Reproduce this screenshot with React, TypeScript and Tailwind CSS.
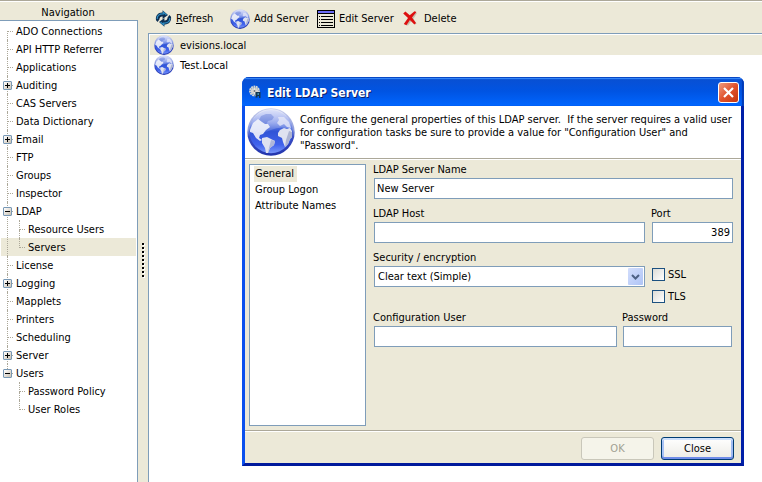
import { useId, useState } from 'react';

type Node = { label: string; expandable?: boolean; children?: string[] };

const tree: Node[] = [
  { label: 'ADO Connections' },
  { label: 'API HTTP Referrer' },
  { label: 'Applications' },
  { label: 'Auditing', expandable: true },
  { label: 'CAS Servers' },
  { label: 'Data Dictionary' },
  { label: 'Email', expandable: true },
  { label: 'FTP' },
  { label: 'Groups' },
  { label: 'Inspector' },
  { label: 'LDAP', expandable: true, children: ['Resource Users', 'Servers'] },
  { label: 'License' },
  { label: 'Logging', expandable: true },
  { label: 'Mapplets' },
  { label: 'Printers' },
  { label: 'Scheduling' },
  { label: 'Server', expandable: true },
  { label: 'Users', expandable: true, children: ['Password Policy', 'User Roles'] },
];

function Globe({ className }: { className: string }) {
  const id = useId();
  return (
    <svg viewBox="0 0 48 48" className={className} aria-hidden="true">
      <defs>
        <linearGradient id={id + 'r'} x1="0" y1="0" x2="0" y2="1">
          <stop offset="0" stopColor="#c9cfee" />
          <stop offset="0.45" stopColor="#8c9bdc" />
          <stop offset="0.6" stopColor="#3a4ec4" />
          <stop offset="1" stopColor="#2234ac" />
        </linearGradient>
        <linearGradient id={id + 'o'} x1="0" y1="0" x2="0" y2="1">
          <stop offset="0" stopColor="#aab6f0" />
          <stop offset="0.3" stopColor="#6d86e6" />
          <stop offset="0.5" stopColor="#3054d6" />
          <stop offset="0.8" stopColor="#4062ec" />
          <stop offset="1" stopColor="#7896fa" />
        </linearGradient>
        <linearGradient id={id + 'g'} x1="0" y1="0" x2="0" y2="1">
          <stop offset="0" stopColor="#ffffff" stopOpacity="0.6" />
          <stop offset="1" stopColor="#ffffff" stopOpacity="0.1" />
        </linearGradient>
      </defs>
      <circle cx="24" cy="24" r="23.7" fill={`url(#${id}r)`} />
      <circle cx="24" cy="23.6" r="21.6" fill={`url(#${id}o)`} />
      <path d="M14 8l5-2 5 0 3 3-2 3-4 1-2 4-4-2-3-3z" fill="#3f5ed4" />
      <path d="M3 22l3-7 5-4 4 3 3 2 3 0 2 3-4 3-3 4-3 1-1 3 3 2-2 1-4-3-3-5-3-1z" fill="#dfe4f7" />
      <path d="M15 30l5-1 4 2 4 2-1 4-4 3-2 5-2 0-1-5-3-5z" fill="#dfe2f0" />
      <path d="M24 32l4 1-1 4-4 3-2 4z" fill="#aeb6da" />
      <path d="M31 9l6 0 5 5 2 6-4-1-3-3-4 2-3-3 2-3z" fill="#c4ccf2" />
      <path d="M33 22l4-2 3 1 3-1 2 3 0 6-2 2-2 5-3 3-2-5-1-4-4-2 0-3z" fill="#dfe2f0" />
      <path d="M42 23l3 1 0 5-2 2-2 5-3 3 1-7z" fill="#adb4d2" />
      <path d="M3 22A21 21 0 0 1 45 22Q35 17 24 22T3 22z" fill={`url(#${id}g)`} />
    </svg>
  );
}

function RefreshIcon() {
  return (
    <svg viewBox="0 0 17 17" className="h-[17px] w-[17px]" aria-hidden="true">
      <path d="M1 10.200C.2 5.500 3.400 2.200 7.600 2.600V.3L13 5 7.600 9V6.400C5.600 6.200 4.600 7.400 4.400 9.400L2.600 12z" fill="#0e2f52" />
      <path d="M2.200 9C2 5.600 4.300 3.700 8.500 3.900V2.300L11.500 5" fill="none" stroke="#2d8cc0" strokeWidth="1.200" />
      <path d="M16 6.800c.8 4.700-2.400 8-6.600 7.600v2.300L4 12l5.400-4v2.600c2 .2 3-1 3.200-3L14.400 5z" fill="#0e2f52" />
      <path d="M14.800 8c.2 3.400-2.100 5.300-6.300 5.100v1.600L5.500 12" fill="none" stroke="#2d8cc0" strokeWidth="1.200" />
    </svg>
  );
}

function EditIcon() {
  return (
    <svg viewBox="0 0 18 18" className="h-[18px] w-[18px]" shapeRendering="crispEdges" aria-hidden="true">
      <rect width="18" height="18" fill="#000" />
      <rect x="1" y="1" width="16" height="2" fill="#6b6bf5" />
      <rect x="1" y="4" width="16" height="13" fill="#ece9d8" />
      {[6, 9, 12, 15].map((y) => (
        <g key={y} fill="#000">
          <rect x="2" y={y} width="1" height="1" />
          <rect x="4" y={y} width="12" height="1" />
        </g>
      ))}
    </svg>
  );
}

function DeleteIcon() {
  return (
    <svg viewBox="0 0 14 15" className="h-[15px] w-[14px]" aria-hidden="true">
      <path d="M2.500 3L7 7.500 3 14l2 .6 3.600-4.800 4 3.800 1-1.200-3.300-4.500L14 2 12 1.200 8.300 5.600z" fill="#c4bfae" />
      <path d="M.2 2.400L2.400.4l4.300 3.900L11.600.2l1.800.9-4.400 5.300 4 5.500-1.600 1.500-4.500-4.400-3.500 5.300-2.600-1.300L5 6.900z" fill="#dd1010" />
    </svg>
  );
}

function GearIcon() {
  return (
    <svg viewBox="0 0 13 14" className="h-[14px] w-[13px]" aria-hidden="true">
      <circle cx="5.500" cy="6" r="4.400" fill="none" stroke="#d9d9d2" strokeWidth="2" strokeDasharray="1.800 .6" />
      <circle cx="5.500" cy="6" r="3.800" fill="#c3c5c4" />
      <path d="M5.500 2.500v7M2 6h7M3 3.500l5 5M8 3.500l-5 5" stroke="#f2f2ee" strokeWidth=".7" />
      <circle cx="5.500" cy="6" r="1" fill="#70747a" />
      <path d="M6.500 7h5v6H10v-2H8.500v1.500h-2z" fill="#123650" />
      <path d="M8.500 8H10v2H8.500z" fill="#3f8fb0" />
    </svg>
  );
}

function TreeLabel({ label, selected, level }: { label: string; selected: boolean; level: number }) {
  return (
    <button
      type="button"
      className={`flex h-[18px] w-full items-center text-left whitespace-nowrap ${level ? 'pl-[27px]' : 'pl-[15px]'} ${selected ? 'bg-[#ece9d8]' : ''}`}
    >
      {label}
    </button>
  );
}

function TreeItem({ node, first, last }: { node: Node; first: boolean; last: boolean }) {
  return (
    <li className="relative">
      <TreeLabel label={node.label} selected={false} level={0} />
      {node.children && (
        <ul>
          {node.children.map((c, i) => (
            <li key={c} className="relative">
              <TreeLabel label={c} selected={c === 'Servers'} level={1} />
              <span className="absolute top-0 left-[18px] h-[10px] w-[6px] border-b border-l border-dotted border-[#aca899]" />
              {i === 0 && <span className="absolute top-[10px] left-[18px] h-2 border-l border-dotted border-[#aca899]" />}
            </li>
          ))}
        </ul>
      )}
      <span
        className={`absolute left-[6px] border-l border-dotted border-[#aca899] ${first ? 'top-[9px] bottom-0' : last ? 'top-0 h-[9px]' : 'inset-y-0'}`}
      />
      <span className="absolute top-[9px] left-[6px] w-[6px] border-t border-dotted border-[#aca899]" />
      {node.expandable && (
        <span className="absolute top-[5px] left-[2px] grid h-[9px] w-[9px] place-items-center rounded-[1px] border border-[#7898b5] bg-linear-to-br from-white to-[#c9c1b2]">
          <svg viewBox="0 0 5 5" className="h-[5px] w-[5px]" shapeRendering="crispEdges" aria-hidden="true">
            <rect y="2" width="5" height="1" />
            {!node.children && <rect x="2" width="1" height="5" />}
          </svg>
        </span>
      )}
    </li>
  );
}

const field = 'h-[21px] w-full border border-[#7f9db9] bg-white px-[2px] pb-px outline-none';

function Field({ label, value = '', type = 'text', className, right }: { label: string; value?: string; type?: string; className: string; right?: boolean }) {
  const id = useId();
  return (
    <div className={`flex flex-col ${className}`}>
      <label htmlFor={id} className="-ml-px h-[14px] leading-[12px] whitespace-nowrap">{label}</label>
      <input id={id} type={type} defaultValue={value} className={right ? `${field} text-right` : field} />
    </div>
  );
}

function Check({ label }: { label: string }) {
  return (
    <label className="flex h-[13px] items-center gap-[3px]">
      <input type="checkbox" className="h-[13px] w-[13px] appearance-none border border-[#1c5180] bg-linear-to-br from-[#dcdcd7] to-white" />
      {label}
    </label>
  );
}

function Dialog({ onClose }: { onClose: () => void }) {
  return (
    <section
      role="dialog"
      aria-label="Edit LDAP Server"
      className="absolute top-[76px] left-[242px] w-[502px] overflow-hidden rounded-t-[7px] bg-[#0040dd]"
    >
      <header className="flex h-[29px] items-center bg-linear-to-b from-[#0a4fd0] via-[#0054e3] to-[#0066ff] pr-[5px] pl-[7px] shadow-[inset_0_1px_0_#0847c4,inset_0_2px_1px_#3c8cfb,inset_-2px_0_1px_#0138b4]">
        <GearIcon />
        <h1 className="ml-[5px] flex-1 pt-[3px] text-[12px] font-bold text-white [text-shadow:1px_1px_0_#0a1f6b]">Edit LDAP Server</h1>
        <button
          type="button"
          aria-label="Close dialog"
          onClick={onClose}
          className="mt-[2px] grid h-[21px] w-[21px] place-items-center rounded-[3px] border border-white bg-linear-to-br from-[#ee9a7d] via-[#e0522c] to-[#c5360c]"
        >
          <svg viewBox="0 0 11 11" className="h-[11px] w-[11px]" aria-hidden="true">
            <path d="M1 1l9 9M10 1l-9 9" stroke="#fff" strokeWidth="2.200" />
          </svg>
        </button>
      </header>

      <div className="border-x-[3px] border-b-[3px] border-r-[#001fa8] border-b-[#001a9c] border-l-[#0a50ee] bg-[#ece9d8]">
        <div className="flex gap-[5px] border-b border-[#aca899] bg-white py-[2px] pl-[2px]">
          <Globe className="h-12 w-12 shrink-0" />
          <p className="pt-[5px] leading-[13px] whitespace-pre">
            {'Configure the general properties of this LDAP server.  If the server requires a valid user\nfor configuration tasks be sure to provide a value for "Configuration User" and\n"Password".'}
          </p>
        </div>

        <div className="flex gap-2 border-t border-t-white py-1 pr-2 pl-1">
          <ul className="h-[262px] w-[117px] shrink-0 border border-[#7f9db9] bg-white px-1 py-px">
            {['General', 'Group Logon', 'Attribute Names'].map((t, i) => (
              <li key={t} className="flex h-4">
                <button type="button" className={`pl-px leading-4 ${i === 0 ? 'bg-[#ece9d8] pr-[3px]' : ''}`}>{t}</button>
              </li>
            ))}
          </ul>

          <form className="flex min-w-0 flex-1 flex-col gap-[9px]" onSubmit={(e) => e.preventDefault()}>
            <Field label="LDAP Server Name" value="New Server" className="w-full" />
            <div className="flex gap-[7px]">
              <Field label="LDAP Host" className="flex-1" />
              <Field label="Port" value="389" className="w-[81px]" right />
            </div>
            <div className="flex gap-[7px]">
              <div className="flex flex-1 flex-col">
                <label htmlFor="security" className="-ml-px h-[14px] leading-[12px]">Security / encryption</label>
                <div className="relative">
                  <select id="security" className="h-[21px] w-full appearance-none border border-[#7f9db9] bg-white px-[3px] outline-none">
                    <option>Clear text (Simple)</option>
                  </select>
                  <span className="pointer-events-none absolute top-[2px] right-[2px] grid h-[17px] w-[15px] place-items-center rounded-[1px] bg-linear-to-br from-[#d3defc] to-[#afc4f6]">
                    <svg viewBox="0 0 9 6" className="h-[6px] w-[9px]" aria-hidden="true">
                      <path d="M1 1l3.500 3.500L8 1" fill="none" stroke="#4d6185" strokeWidth="2" />
                    </svg>
                  </span>
                </div>
              </div>
              <div className="flex w-[81px] flex-col gap-[9px] pt-4">
                <Check label="SSL" />
                <Check label="TLS" />
              </div>
            </div>
            <div className="flex gap-[6px] pr-px">
              <Field label="Configuration User" className="flex-1" />
              <Field label="Password" type="password" className="w-[109px]" />
            </div>
          </form>
        </div>

        <footer className="flex justify-end gap-[7px] border-t border-t-[#aca899] pt-[6px] pr-[7px] pb-[3px] shadow-[inset_0_1px_0_#fff]">
          <button type="button" disabled className="h-[23px] w-[73px] rounded-[3px] border border-[#c9c7ba] bg-[#f5f4ea] text-[#a1a192]">OK</button>
          <button
            type="button"
            onClick={onClose}
            className="h-[23px] w-[73px] rounded-[3px] border border-[#003c74] bg-linear-to-b from-white to-[#ecebe5] shadow-[inset_0_2px_0_#cee0fb,inset_0_-2px_0_#6f8ce8,inset_2px_0_0_#a9c3f5,inset_-2px_0_0_#a0bbf2]"
          >
            Close
          </button>
        </footer>
      </div>
    </section>
  );
}

export default function App() {
  const [open, setOpen] = useState(true);
  return (
    <div className="relative flex min-h-screen border-t border-[#aca899] bg-[#ece9d8] font-['DejaVu_Sans_Condensed','DejaVu_Sans',sans-serif] text-[11px] leading-[13px] text-black shadow-[inset_0_1px_0_#fff]">
      <nav aria-label="Navigation" className="flex w-[138px] shrink-0 flex-col">
        <h2 className="h-[19px] pt-[5px] pr-[2px] text-center">Navigation</h2>
        <ul className="flex-1 border-t border-r border-[#7f9db9] bg-white p-px">
          {tree.map((n, i) => (
            <TreeItem key={n.label} node={n} first={i === 0} last={i === tree.length - 1} />
          ))}
        </ul>
      </nav>

      <div className="flex w-[10px] shrink-0 flex-col items-center justify-center gap-[2px] pt-9">
        {Array.from({ length: 9 }, (_, i) => (
          <span key={i} className="h-[2px] w-[2px] bg-black shadow-[1px_1px_0_#fff]" />
        ))}
      </div>

      <main className="flex min-w-0 flex-1 flex-col">
        <div role="toolbar" className="flex h-8 shrink-0 items-center pt-[3px] pl-[7px]">
          <button type="button" className="flex items-center gap-1">
            <RefreshIcon />
            <span className="w-[54px] text-left"><span className="underline">R</span>efresh</span>
          </button>
          <button type="button" className="flex items-center gap-1">
            <Globe className="h-5 w-5" />
            <span className="w-[63px] text-left whitespace-nowrap">Add Server</span>
          </button>
          <button type="button" className="flex items-center gap-1">
            <EditIcon />
            <span className="w-[64px] text-left whitespace-nowrap">Edit Server</span>
          </button>
          <button type="button" className="flex items-center gap-[7px]">
            <DeleteIcon />
            Delete
          </button>
        </div>
        <ul className="flex-1 border-t border-l border-[#7f9db9] bg-white pt-px pl-px">
          {['evisions.local', 'Test.Local'].map((s, i) => (
            <li key={s} className={`flex h-5 items-center gap-[6px] pl-1 ${i === 0 ? 'bg-[#ece9d8]' : ''}`}>
              <Globe className="h-5 w-5" />
              {s}
            </li>
          ))}
        </ul>
      </main>

      {open && <Dialog onClose={() => setOpen(false)} />}
    </div>
  );
}
